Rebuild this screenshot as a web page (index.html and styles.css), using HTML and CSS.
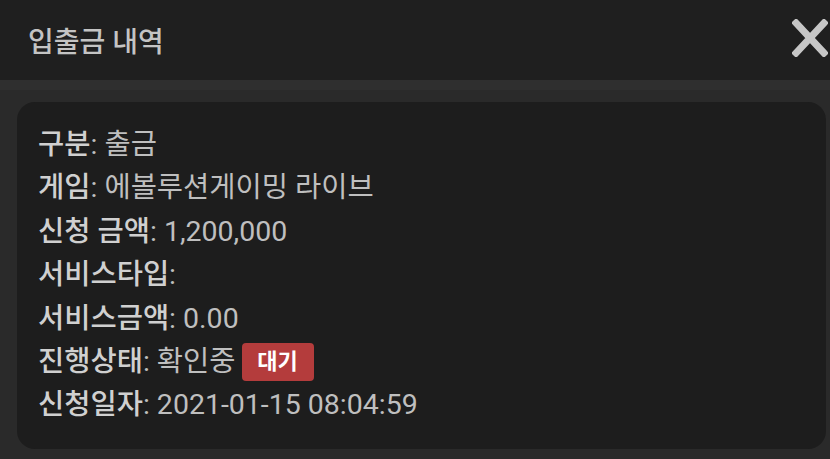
FILE: index.html
```html
<!DOCTYPE html>
<html lang="ko">
<head>
    <meta charset="UTF-8">
    <meta name="viewport" content="width=device-width, initial-scale=1.0">
    <title>입출금 내역</title>
    <link rel="stylesheet" href="styles.css">
</head>
<body>
    <header>
        <h1>입출금 내역</h1>
        <button class="close-btn" aria-label="닫기">
            <svg width="36" height="38" viewBox="0 0 36 38"><path d="M4 4 L32 34 M32 4 L4 34" stroke="currentColor" stroke-width="7" stroke-linecap="square"/></svg>
        </button>
    </header>

    <main class="content">
        <div class="detail-card">
            <div class="row"><span class="label">구분</span>: 출금</div>
            <div class="row"><span class="label">게임</span>: 에볼루션게이밍 라이브</div>
            <div class="row"><span class="label">신청 금액</span>: 1,200,000</div>
            <div class="row"><span class="label">서비스타입</span>:</div>
            <div class="row"><span class="label">서비스금액</span>: 0.00</div>
            <div class="row"><span class="label">진행상태</span>: 확인중<span class="badge">대기</span></div>
            <div class="row"><span class="label">신청일자</span>: 2021-01-15 08:04:59</div>
        </div>
    </main>
</body>
</html>
```

FILE: styles.css
```css
:root {
    --header: #1f1f1f;
    --page: #2a2a2a;
    --card: #1d1d1d;
    --text: #bfbfbf;
    --label: #d0d0d0;
    --badge: #b43c3c;
}

* {
    margin: 0;
    padding: 0;
    box-sizing: border-box;
    font-family: Roboto, 'Noto Sans CJK KR', sans-serif;
}

body {
    background: var(--page);
    color: var(--text);
    height: 100vh;
    overflow: hidden;
}

header {
    height: 80px;
    background: var(--header);
    display: flex;
    justify-content: space-between;
    align-items: center;
    padding: 0 2px 0 28px;
}

h1 {
    font-size: 28px;
    font-weight: 500;
    color: #c4c4c4;
}

.close-btn {
    background: none;
    border: none;
    color: #c6c6c6;
    display: flex;
    margin-bottom: 4px;
    cursor: pointer;
}

.content {
    padding: 22px 4px 0 17px;
    background: linear-gradient(to bottom, #2f2f2f 0, #2f2f2f 10px, var(--page) 10px);
}

.detail-card {
    background: var(--card);
    border-radius: 18px;
    padding: 21px 21px 22px;
    height: 347px;
}

.row {
    font-size: 28.5px;
    line-height: 43.4px;
    display: flex;
    align-items: center;
    white-space: pre;
}

.label {
    color: var(--label);
    font-weight: 500;
}

.badge {
    display: inline-flex;
    align-items: center;
    justify-content: center;
    background: var(--badge);
    color: #fff;
    font-size: 22px;
    font-weight: 700;
    width: 72px;
    height: 38px;
    border-radius: 4px;
    margin-left: 6px;
}
```
